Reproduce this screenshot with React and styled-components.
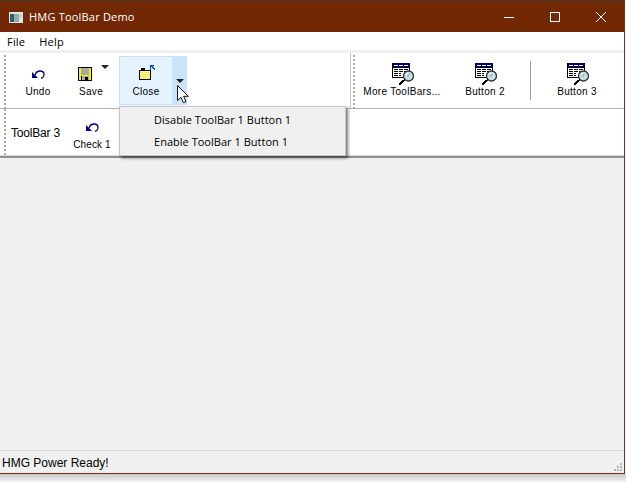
import React from 'react';
import styled, { createGlobalStyle } from 'styled-components';

const Global = createGlobalStyle`
  html, body {
    margin: 0;
    padding: 0;
    background: #f4f4f4;
    overflow: hidden;
  }
`;

const Page = styled.div`
  width: 626px;
  height: 482px;
  background: linear-gradient(#fff 0, #fff 473px, #c8c8c8 474px, #f2f2f2 482px);
`;

const Window = styled.div`
  position: relative;
  box-sizing: border-box;
  width: 625px;
  height: 474px;
  border-right: 1px solid #7a2f10;
  border-bottom: 1px solid #7a2f10;
  border-top: 1px solid #4a3a30;
  display: flex;
  flex-direction: column;
  background: #f0f0f0;
  font-family: "Liberation Sans", Arial, sans-serif;
`;

const TitleBar = styled.div`
  height: 31px;
  flex: none;
  background: #722805;
  display: flex;
  align-items: center;
  color: #fff;
`;

const AppIcon = styled.svg`
  width: 16px;
  height: 16px;
  margin: 0 5px 0 8px;
`;

const Title = styled.div`
  font: 11px "Open Sans", sans-serif;
  letter-spacing: 0.2px;
  flex: 1;
`;

const WinButton = styled.div`
  width: 46px;
  height: 31px;
  display: flex;
  align-items: center;
  justify-content: center;
`;

const MenuBar = styled.div`
  height: 18px;
  flex: none;
  background: #fff;
  display: flex;
  align-items: center;
  gap: 14px;
  padding-left: 7px;
  font: 11px "Open Sans", sans-serif;
  letter-spacing: 0.2px;
  color: #000;
`;

const Rebar = styled.div`
  flex: none;
  background: #fff;
  border-top: 3px solid #f0f0f0;
  border-bottom: 2px solid #8f8f8f;
  box-shadow: inset 0 -1px #dcdcdc;
`;

const Row = styled.div`
  display: flex;
  box-sizing: border-box;
  height: ${({ $h }) => $h}px;
  border-bottom: ${({ $line }) => ($line ? '1px solid #b4b4b4' : 'none')};
`;

const Band = styled.div`
  display: flex;
  align-items: ${({ $center }) => ($center ? 'center' : 'flex-start')};
  width: ${({ $w }) => $w}px;
  flex: ${({ $grow }) => ($grow ? 1 : 'none')};
  padding-top: ${({ $top }) => $top || 0}px;
  padding-bottom: ${({ $center }) => ($center ? 1 : 0)}px;
  box-sizing: border-box;
  height: 100%;
  border-right: ${({ $edge }) => ($edge ? '1px solid #c8c8c8' : 'none')};
`;

const Gripper = styled.div`
  width: 2px;
  flex: none;
  align-self: stretch;
  margin: ${({ $m }) => $m};
  background: repeating-linear-gradient(#a8a8a8 0 2px, transparent 2px 4px);
`;

const Tool = styled.div`
  position: relative;
  box-sizing: border-box;
  width: ${({ $w }) => $w}px;
  height: ${({ $h }) => $h || 49}px;
  flex: none;
  display: flex;
  flex-direction: column;
  align-items: center;
  font-size: 10px;
  letter-spacing: ${({ $ls }) => $ls ?? 0.3}px;
  color: #000;
  white-space: nowrap;
  padding-top: ${({ $pt }) => $pt || 7}px;
`;

const IconBox = styled.div`
  height: 22px;
  display: flex;
  align-items: center;
  justify-content: center;
  margin-left: ${({ $l }) => $l || 0}px;
  margin-right: ${({ $r }) => $r || 0}px;
`;

const Label = styled.div`
  margin-top: 1px;
  line-height: 12px;
`;

const Caret = styled.div`
  position: absolute;
  top: ${({ $y }) => $y}px;
  right: ${({ $x }) => $x}px;
  width: 0;
  height: 0;
  border-left: 4px solid transparent;
  border-right: 4px solid transparent;
  border-top: 4px solid #222;
`;

const SplitButton = styled.div`
  display: flex;
  width: 68px;
  height: 49px;
  flex: none;
  box-sizing: border-box;
  border: 1px solid #c4e2fb;
  background: #e5f3ff;
`;

const SplitArrow = styled.div`
  position: relative;
  width: 14px;
  flex: none;
  background: #cce4f9;
`;

const Divider = styled.div`
  width: 1px;
  height: 39px;
  margin: 5px 0 0 9px;
  background: #a0a0a0;
  flex: none;
`;

const Spacer = styled.div`
  width: ${({ $w }) => $w}px;
  flex: none;
`;

const BandTitle = styled.div`
  font-size: 12px;
  letter-spacing: -0.2px;
  color: #000;
  margin-left: 5px;
  padding-top: 2px;
  width: 60px;
  flex: none;
`;

const Client = styled.div`
  flex: 1;
  background: #f0f0f0;
`;

const StatusBar = styled.div`
  position: relative;
  height: 23px;
  flex: none;
  box-sizing: border-box;
  border-top: 1px solid #d7d7d7;
  background: #f0f0f0;
  font-size: 12px;
  color: #000;
  padding: 5px 0 0 2px;
  line-height: 15px;
`;

const Grip = styled.svg`
  position: absolute;
  right: 1px;
  bottom: 0;
`;

const Menu = styled.div`
  position: absolute;
  left: 119px;
  top: 105px;
  z-index: 2;
  width: 227px;
  height: 50px;
  box-sizing: border-box;
  background: #f0f0f0;
  border: 1px solid #c6c6c6;
  padding: 2px 0;
  box-shadow: 2px 2px 3px rgba(0, 0, 0, 0.55);
`;

const MenuItem = styled.div`
  height: 22px;
  padding-left: 34px;
  font: 11px/22px "Open Sans", sans-serif;
  letter-spacing: 0.02px;
  color: #000;
`;

const Cursor = styled.svg`
  position: absolute;
  left: 176px;
  top: 83px;
  z-index: 3;
`;

const UndoIcon = () => (
  <svg width="16" height="16" viewBox="0 0 16 16">
    <path fill="#000080" d="M2 6v6h6z" />
    <path fill="none" stroke="#000080" strokeWidth="1.3" d="M5 9C6 6 8 5 10 5C13 5 14 7 14 8.5C14 10.5 12.5 12 11 12" />
  </svg>
);

const SaveIcon = () => (
  <svg width="16" height="16" viewBox="0 0 16 16" shapeRendering="crispEdges">
    <path fill="#000" d="M1 1h14v14h-14z" />
    <path fill="#f4f000" d="M2 2h2v12h-2zM12 2h2v12h-2zM4 9h8v1h-8z" />
    <path fill="#a8a8a8" d="M4 2h8v7h-8z" />
    <path fill="#a8a8a8" d="M5 10h7v4h-7z" />
    <path fill="#000" d="M8 11h3v3h-3z" />
  </svg>
);

const CloseIcon = () => (
  <svg width="18" height="18" viewBox="0 0 18 18" shapeRendering="crispEdges">
    <path fill="#000" d="M4 3h4v2h6v10h-12v-10h2z" />
    <path fill="#fff890" d="M3 6h10v8h-10z" />
    <path fill="#e8d820" d="M3 7h1v1h-1zM5 7h1v1h-1zM7 7h1v1h-1zM9 7h1v1h-1zM11 7h1v1h-1zM4 9h1v1h-1zM6 9h1v1h-1zM8 9h1v1h-1zM10 9h1v1h-1zM12 9h1v1h-1zM3 11h1v1h-1zM5 11h1v1h-1zM7 11h1v1h-1zM9 11h1v1h-1zM11 11h1v1h-1zM4 13h1v1h-1zM6 13h1v1h-1zM8 13h1v1h-1zM10 13h1v1h-1zM12 13h1v1h-1z" />
    <path fill="#1040e0" d="M13 0h4v1h-1v1h1v1h1v2h-1v-1h-1v-1h-1v-1h-1v3h-1z" />
  </svg>
);

const GridIcon = () => (
  <svg width="22" height="22" viewBox="0 0 22 22" shapeRendering="crispEdges">
    <path fill="#000" d="M0 0h18v15h-18z" />
    <path fill="#000080" d="M1 0h16v4h-16z" />
    <path fill="#fff" d="M2 2h4v1h-4zM7 2h4v1h-4zM12 2h4v1h-4z" />
    <path fill="#fff" d="M1 5h16v9h-16z" />
    <path fill="#000" d="M2 6h4v1h-4zM7 6h4v1h-4zM12 6h4v1h-4zM2 8h4v1h-4zM7 8h4v1h-4zM12 8h4v1h-4zM2 10h4v1h-4zM7 10h2v1h-2zM2 12h4v1h-4zM7 12h2v1h-2z" />
    <circle cx="16.5" cy="13" r="5" fill="#d4dcdc" stroke="#333" strokeWidth="1.3" shapeRendering="auto" />
    <path fill="#fff" d="M14 10h2v1h-2z" />
    <path fill="#50e0e0" d="M16 11h2v1h-2zM15 12h2v2h-2z" />
    <path fill="#000" d="M12 16h1v1h-1zM10 17h3v1h-3zM9 18h3v1h-3zM8 19h3v1h-3zM7 20h3v1h-3zM7 21h2v1h-2z" />
  </svg>
);

const App = () => (
  <Page>
    <Global />
    <Window>
      <TitleBar>
        <AppIcon viewBox="0 0 16 16" shapeRendering="crispEdges">
          <path fill="#dfe6e6" d="M1 3h14v11h-14z" />
          <path fill="#2e5f70" d="M2 5h4v8h-4z" />
          <path fill="#8fb0a8" d="M6 5h5v8h-5z" />
          <path fill="#c8d4d4" d="M11 5h3v4h-3z" />
        </AppIcon>
        <Title>HMG ToolBar Demo</Title>
        <WinButton>
          <svg width="10" height="10" viewBox="0 0 10 10" shapeRendering="crispEdges">
            <path fill="#fff" d="M0 5h10v1h-10z" />
          </svg>
        </WinButton>
        <WinButton>
          <svg width="10" height="10" viewBox="0 0 10 10" fill="none" stroke="#fff" shapeRendering="crispEdges">
            <path d="M.5 .5h9v9h-9z" />
          </svg>
        </WinButton>
        <WinButton>
          <svg width="10" height="10" viewBox="0 0 10 10" fill="none" stroke="#fff">
            <path d="M0 0l10 10M10 0l-10 10" />
          </svg>
        </WinButton>
      </TitleBar>
      <MenuBar>
        <span>File</span>
        <span>Help</span>
      </MenuBar>
      <Rebar>
        <Row $h={56} $line>
          <Band $w={351} $edge $top={3}>
            <Gripper $m="-1px 0 0 4px" />
            <Tool $w={64}>
              <IconBox><UndoIcon /></IconBox>
              <Label>Undo</Label>
            </Tool>
            <Tool $w={42}>
              <IconBox $r={12}><SaveIcon /></IconBox>
              <Label>Save</Label>
              <Caret $y={9} $x={3} />
            </Tool>
            <Spacer $w={7} />
            <SplitButton>
              <Tool $w={52} $h={47} $pt={6}>
                <IconBox><CloseIcon /></IconBox>
                <Label>Close</Label>
              </Tool>
              <SplitArrow>
                <Caret $y={22} $x={2} />
              </SplitArrow>
            </SplitButton>
          </Band>
          <Band $grow $top={3}>
            <Gripper $m="-1px 0 0 2px" />
            <Tool $w={94}>
              <IconBox $l={2}><GridIcon /></IconBox>
              <Label>More ToolBars...</Label>
            </Tool>
            <Tool $w={72}>
              <IconBox $l={2}><GridIcon /></IconBox>
              <Label>Button 2</Label>
            </Tool>
            <Divider />
            <Tool $w={92}>
              <IconBox $l={2}><GridIcon /></IconBox>
              <Label>Button 3</Label>
            </Tool>
          </Band>
        </Row>
        <Row $h={47}>
          <Band $grow $center>
            <Gripper $m="0 0 0 4px" />
            <BandTitle>ToolBar 3</BandTitle>
            <Tool $w={42} $h={46} $pt={7} $ls={0.1}>
              <IconBox><UndoIcon /></IconBox>
              <Label>Check 1</Label>
            </Tool>
          </Band>
        </Row>
      </Rebar>
      <Client />
      <StatusBar>
        HMG Power Ready!
        <Grip width="10" height="10" viewBox="0 0 10 10" shapeRendering="crispEdges">
          <path fill="#b8b8b8" d="M7 0h2v2h-2zM4 3h2v2h-2zM7 3h2v2h-2zM1 6h2v2h-2zM4 6h2v2h-2zM7 6h2v2h-2z" />
        </Grip>
      </StatusBar>
      <Menu>
        <MenuItem>Disable ToolBar 1 Button 1</MenuItem>
        <MenuItem>Enable ToolBar 1 Button 1</MenuItem>
      </Menu>
      <Cursor width="14" height="20" viewBox="0 0 14 20">
        <path fill="#fff" stroke="#111" d="M1.5 1.5v15l3.5-3.2 2.4 5.4 2.6-1.1-2.4-5.3h4.8z" />
      </Cursor>
    </Window>
  </Page>
);

export default App;
